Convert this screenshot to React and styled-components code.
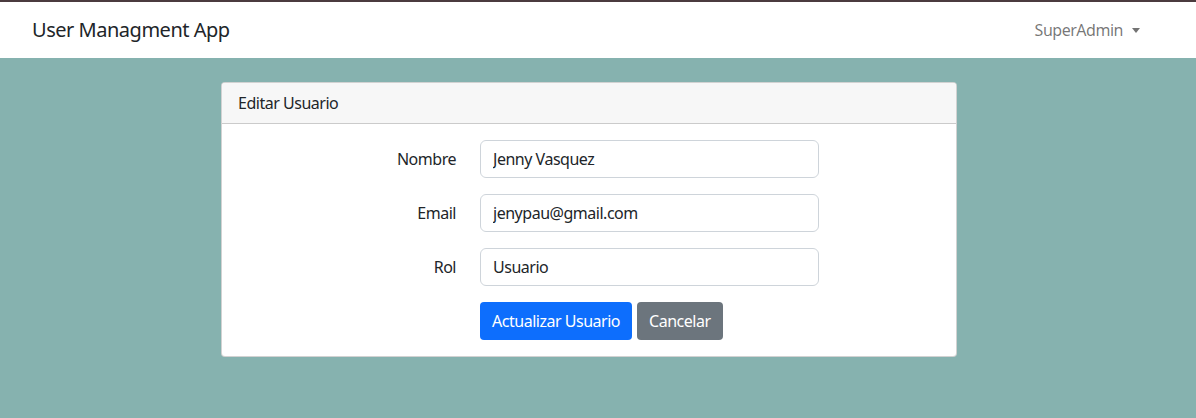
import React from "react";
import styled, { createGlobalStyle } from "styled-components";

const GlobalStyle = createGlobalStyle`
  * { box-sizing: border-box; }
  body {
    margin: 0;
    background: #86b2af;
    font-family: "Noto Sans", "Open Sans", sans-serif;
    font-size: 16px;
    line-height: 1.5;
    letter-spacing: -0.03em;
    color: #212529;
  }
`;

const Navbar = styled.nav`
  display: flex;
  align-items: center;
  justify-content: space-between;
  height: 58px;
  padding: 0 56px 0 32px;
  background: #fff;
  border-top: 2px solid #4b3b3f;
`;

const Brand = styled.span`
  font-size: 20px;
  color: #212529;
`;

const Dropdown = styled.span`
  display: flex;
  align-items: center;
  color: rgba(0, 0, 0, 0.55);
  font-size: 16px;
`;

const Caret = styled.span`
  margin-left: 9px;
  border-top: 5px solid rgba(0, 0, 0, 0.55);
  border-left: 4px solid transparent;
  border-right: 4px solid transparent;
`;

const Main = styled.main`
  padding: 24px 0 0 221px;
`;

const Card = styled.div`
  width: 736px;
  background: #fff;
  border: 1px solid rgba(0, 0, 0, 0.175);
  border-radius: 4px;
  overflow: hidden;
`;

const CardHeader = styled.div`
  padding: 8px 16px;
  background: #f7f7f7;
  border-bottom: 1px solid rgba(0, 0, 0, 0.175);
`;

const CardBody = styled.form`
  padding: 16px;
  display: flex;
  flex-direction: column;
  gap: 16px;
`;

const Row = styled.div`
  display: grid;
  grid-template-columns: 218px 339px;
  column-gap: 24px;
  align-items: center;
`;

const Label = styled.label`
  text-align: right;
`;

const Input = styled.input`
  height: 38px;
  padding: 6px 12px;
  font: inherit;
  letter-spacing: inherit;
  color: #212529;
  border: 1px solid #ced4da;
  border-radius: 6px;
  outline: none;
`;

const Actions = styled.div`
  display: flex;
  gap: 5px;
`;

const Button = styled.button`
  height: 38px;
  padding: 6px 12px;
  font: inherit;
  letter-spacing: inherit;
  color: #fff;
  background: ${(p) => (p.$variant === "secondary" ? "#6c757d" : "#0d6efd")};
  border: none;
  border-radius: 4px;
`;

const fields = [
  ["Nombre", "Jenny Vasquez"],
  ["Email", "jenypau@gmail.com"],
  ["Rol", "Usuario"],
];

export default function App() {
  return (
    <>
      <GlobalStyle />
      <Navbar>
        <Brand>User Managment App</Brand>
        <Dropdown>
          SuperAdmin
          <Caret />
        </Dropdown>
      </Navbar>
      <Main>
        <Card>
          <CardHeader>Editar Usuario</CardHeader>
          <CardBody>
            {fields.map(([label, value]) => (
              <Row key={label}>
                <Label>{label}</Label>
                <Input defaultValue={value} />
              </Row>
            ))}
            <Row>
              <span />
              <Actions>
                <Button type="button">Actualizar Usuario</Button>
                <Button type="button" $variant="secondary">
                  Cancelar
                </Button>
              </Actions>
            </Row>
          </CardBody>
        </Card>
      </Main>
    </>
  );
}
